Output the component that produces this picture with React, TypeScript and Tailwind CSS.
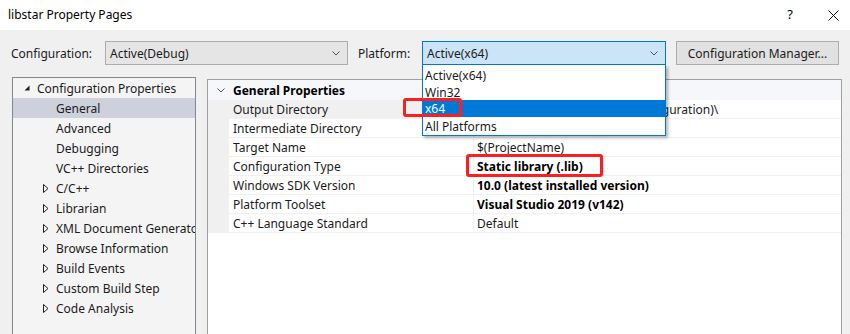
import React from "react";

function Chevron({ className }: { className?: string }) {
  return (
    <svg width="8" height="5" viewBox="0 0 8 5" className={className}>
      <polyline points="0.5,0.5 4,4 7.5,0.5" fill="none" stroke="#555" strokeWidth="1" />
    </svg>
  );
}

function ExpandedTri() {
  return (
    <svg width="6" height="6" viewBox="0 0 6 6">
      <polygon points="5.5,0.5 5.5,5.5 0.5,5.5" fill="#1e1e1e" />
    </svg>
  );
}

function CollapsedTri() {
  return (
    <svg width="6" height="9" viewBox="0 0 6 9">
      <polygon points="0.5,0.5 5,4.5 0.5,8.5" fill="none" stroke="#1e1e1e" strokeWidth="1" />
    </svg>
  );
}

type TreeItem = { label: string; level: number; arrow?: "open" | "closed"; selected?: boolean };

const tree: TreeItem[] = [
  { label: "Configuration Properties", level: 0, arrow: "open" },
  { label: "General", level: 1, selected: true },
  { label: "Advanced", level: 1 },
  { label: "Debugging", level: 1 },
  { label: "VC++ Directories", level: 1 },
  { label: "C/C++", level: 1, arrow: "closed" },
  { label: "Librarian", level: 1, arrow: "closed" },
  { label: "XML Document Generator", level: 1, arrow: "closed" },
  { label: "Browse Information", level: 1, arrow: "closed" },
  { label: "Build Events", level: 1, arrow: "closed" },
  { label: "Custom Build Step", level: 1, arrow: "closed" },
  { label: "Code Analysis", level: 1, arrow: "closed" },
];

type Prop = { label: string; value: string; bold?: boolean; selected?: boolean };

const props: Prop[] = [
  { label: "Output Directory", value: "$(SolutionDir)$(Platform)\\$(Configuration)\\", selected: true },
  { label: "Intermediate Directory", value: "$(Platform)\\$(Configuration)\\" },
  { label: "Target Name", value: "$(ProjectName)" },
  { label: "Configuration Type", value: "Static library (.lib)", bold: true },
  { label: "Windows SDK Version", value: "10.0 (latest installed version)", bold: true },
  { label: "Platform Toolset", value: "Visual Studio 2019 (v142)", bold: true },
  { label: "C++ Language Standard", value: "Default" },
];

export default function App() {
  return (
    <div className="relative w-[850px] h-[334px] overflow-hidden bg-[#f0f0f0] text-[12px] text-[#1b1b1b] font-['Noto_Sans','Liberation_Sans',sans-serif]">
      {/* Title bar */}
      <div className="h-[30px] bg-white flex items-center pl-[8px]">
        <span className="text-[12px] text-black">libstar Property Pages</span>
        <div className="ml-auto flex items-center">
          <span className="w-[10px] text-center text-[13px] text-black">?</span>
          <svg width="11" height="11" viewBox="0 0 11 11" className="ml-[33px] mr-[11px]">
            <path d="M0.5 0.5 L10.5 10.5 M10.5 0.5 L0.5 10.5" stroke="#111" strokeWidth="1" />
          </svg>
        </div>
      </div>

      {/* Toolbar */}
      <div className="flex items-center h-[24px] mt-[11px] pl-[11px]">
        <span className="w-[94px] pt-[1px]">Configuration:</span>
        <div className="w-[243px] h-[24px] border border-[#adadad] bg-[#e5e5e5] flex items-center pl-[4px] pr-[7px]">
          <span className="pt-[1px]">Active(Debug)</span>
          <Chevron className="ml-auto" />
        </div>
        <span className="ml-[10px] w-[64px] pt-[1px]">Platform:</span>
        <div className="relative w-[244px] h-[24px] border border-[#0078d7] bg-[#cce4f7] flex items-center pl-[4px] pr-[7px]">
          <span className="pt-[1px]">Active(x64)</span>
          <Chevron className="ml-auto" />
          <div className="absolute left-[-1px] top-[23px] w-[244px] h-[71px] bg-white border-x border-b border-[#0078d7] pt-[1px] shadow-[2px_2px_3px_rgba(0,0,0,0.3)] z-10">
            <div className="h-[17px] leading-[17px] pt-[1px] pl-[2px]">Active(x64)</div>
            <div className="h-[17px] leading-[17px] pt-[1px] pl-[2px]">Win32</div>
            <div className="h-[17px] leading-[16px] pt-[1px] pl-[2px] bg-[#0078d7] text-white">x64</div>
            <div className="h-[17px] leading-[17px] pt-[1px] pl-[2px]">All Platforms</div>
          </div>
        </div>
        <div className="ml-[10px] w-[163px] h-[24px] border border-[#adadad] bg-[#e1e1e1] flex items-center justify-center pt-[1px]">
          Configuration Manager...
        </div>
      </div>

      {/* Panels */}
      <div className="flex items-start mt-[12px] pl-[12px]">
        <div className="w-[184px] h-[300px] border border-[#828790] bg-[#f4f4f4] overflow-hidden">
          {tree.map((t) => (
            <div
              key={t.label}
              className={`h-[20px] flex items-center whitespace-nowrap ${t.selected ? "bg-[#cdd1dc]" : ""}`}
            >
              {t.level === 0 ? (
                <>
                  <span className="w-[24px] shrink-0 flex justify-end pr-[7px]">
                    <ExpandedTri />
                  </span>
                  <span className="pt-[2px]">{t.label}</span>
                </>
              ) : (
                <>
                  <span className="w-[43px] shrink-0 flex justify-end pr-[7px] pt-[1px]">
                    {t.arrow === "closed" ? <CollapsedTri /> : null}
                  </span>
                  <span className="pt-[2px]">{t.label}</span>
                </>
              )}
            </div>
          ))}
        </div>

        <div className="ml-[11px] mt-[2px] w-[635px] h-[300px] border border-[#a0a0a0] bg-white overflow-hidden">
          <div className="h-[20px] flex items-center bg-[#f5f7fa]">
            <span className="w-[25px] flex justify-center">
              <Chevron />
            </span>
            <span className="font-bold text-black pt-[2px]">General Properties</span>
          </div>
          {props.map((p) => (
            <div key={p.label} className="h-[19px] flex whitespace-nowrap">
              <div className="w-[21px] bg-[#f0f0f0]" />
              <div
                className={`w-[244px] border-b border-[#f0f0f0] pl-[4px] pt-[1px] leading-[18px] ${p.selected ? "bg-[#f0f0f0]" : ""}`}
              >
                {p.label}
              </div>
              <div
                className={`flex-1 border-b border-l border-[#f0f0f0] pl-[3px] pt-[1px] leading-[18px] overflow-hidden ${p.bold ? "font-bold text-black" : ""}`}
              >
                {p.value}
              </div>
            </div>
          ))}
        </div>
      </div>

      {/* Red annotation boxes */}
      <div className="absolute left-[403px] top-[98px] w-[59px] h-[19px] border-[3px] border-[#fb1f1f] rounded-[3px] z-20" />
      <div className="absolute left-[466px] top-[154px] w-[137px] h-[23px] border-[3px] border-[#fb1f1f] rounded-[3px] z-20" />
    </div>
  );
}
